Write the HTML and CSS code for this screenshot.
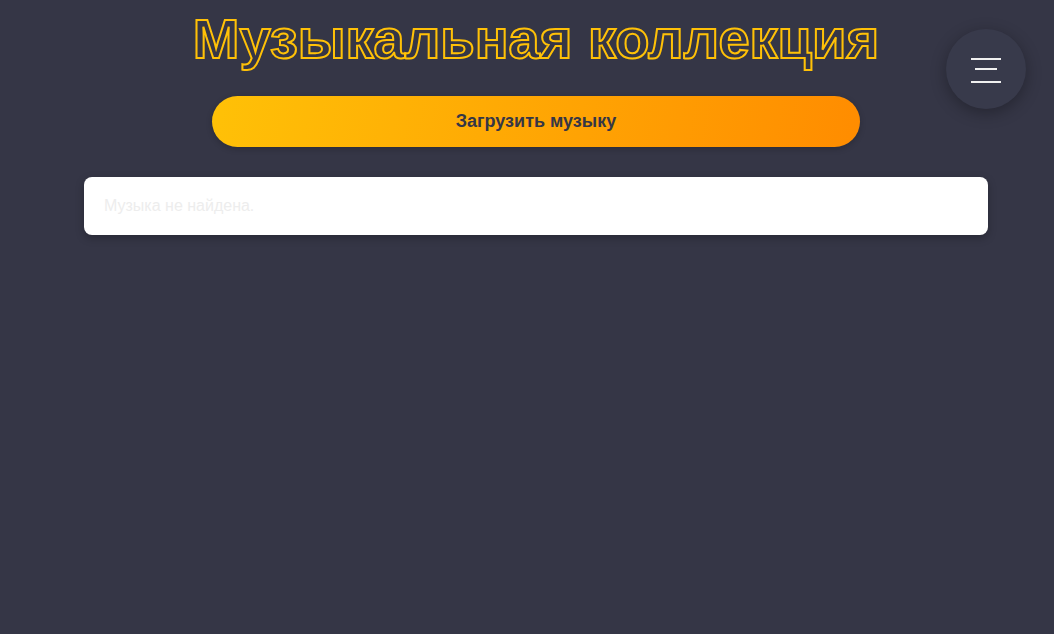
FILE: index.html
```html
<!DOCTYPE html>
<html lang="ru">
<head>
<meta charset="utf-8">
<title>Музыкальная коллекция</title>
<link rel="stylesheet" href="styles.css">
</head>
<body>
<main class="page">
  <h1 class="title">Музыкальная коллекция</h1>
  <button class="upload">Загрузить музыку</button>
  <section class="list">
    <p class="empty">Музыка не найдена.</p>
  </section>
</main>
<button class="menu" aria-label="Меню">
  <span class="bar bar-long"></span>
  <span class="bar bar-short"></span>
  <span class="bar bar-long"></span>
</button>
</body>
</html>
```
FILE: styles.css
```css
html, body {
  margin: 0;
  padding: 0;
  background: #353646;
  height: 100%;
}
body {
  font-family: "Liberation Sans", Arial, sans-serif;
}
.page {
  width: 904px;
  margin-left: 84px;
  display: flex;
  flex-direction: column;
  align-items: center;
  padding-top: 7px;
}
.title {
  margin: 0;
  font-size: 56px;
  line-height: 64px;
  font-weight: bold;
  color: transparent;
  -webkit-text-stroke: 2px #ffc107;
}
.upload {
  margin-top: 25px;
  width: 648px;
  height: 51px;
  border: none;
  border-radius: 26px;
  background: linear-gradient(100deg, #ffc107 0%, #ff8c00 100%);
  color: #353646;
  font-family: "Liberation Sans", Arial, sans-serif;
  font-weight: bold;
  font-size: 18px;
  box-shadow: 0 2px 6px rgba(0,0,0,0.2);
}
.list {
  margin-top: 30px;
  width: 100%;
  height: 58px;
  background: #fff;
  border-radius: 8px;
  box-shadow: 0 3px 8px rgba(0,0,0,0.25);
  display: flex;
  align-items: center;
  padding: 0 20px;
  box-sizing: border-box;
}
.empty {
  margin: 0;
  color: #ededed;
  font-size: 16px;
}
.menu {
  position: absolute;
  top: 29px;
  left: 946px;
  width: 80px;
  height: 80px;
  border-radius: 50%;
  border: none;
  background: #383a4b;
  box-shadow: 0 4px 16px rgba(0,0,0,0.3);
  display: flex;
  flex-direction: column;
  align-items: center;
  padding: 0;
}
.bar {
  display: block;
  height: 2px;
  background: #f0f0f0;
}
.bar-long {
  width: 30px;
}
.bar:first-child {
  margin-top: 29px;
}
.bar-short {
  width: 22px;
  margin-top: 8px;
}
.bar-short + .bar {
  margin-top: 11px;
}
```
